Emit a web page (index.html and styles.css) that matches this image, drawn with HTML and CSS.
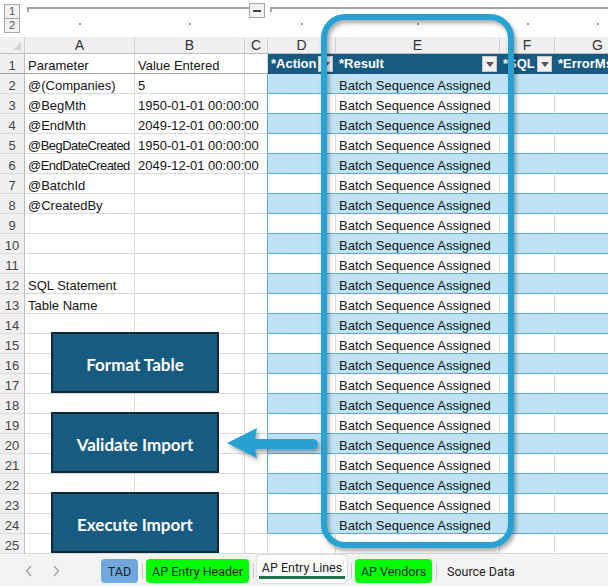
FILE: index.html
```html
<!DOCTYPE html>
<html lang="en">
<head>
    <meta charset="UTF-8">
    <meta name="viewport" content="width=device-width, initial-scale=1.0">
    <title>AP Entry Lines</title>
    <link rel="stylesheet" href="styles.css">
</head>
<body>
<div class="page">
    <div class="sheet">
        <!-- outline / grouping bar -->
        <div class="outline">
            <div class="levels">
                <div class="lvl">1</div>
                <div class="lvl">2</div>
            </div>
            <div class="bracket">
                <div class="line"></div>
                <div class="minus"></div>
            </div>
            <div class="bracket bracket2">
                <div class="line"></div>
            </div>
            <span class="dot"></span>
            <span class="dot"></span>
            <span></span>
            <span class="dot"></span>
            <span class="dot"></span>
            <span class="dot"></span>
            <span class="dot"></span>
        </div>

        <table class="grid">
            <colgroup>
                <col style="width:25px"><col style="width:110px"><col style="width:110px"><col style="width:23px">
                <col style="width:68px"><col style="width:164px"><col style="width:55px"><col style="width:86px">
            </colgroup>
            <tr class="cols">
                <th class="corner"><i></i></th><th>A</th><th>B</th><th>C</th><th>D</th><th>E</th><th>F</th><th>G</th>
            </tr>
            <tr class="r1">
                <th class="rn">1</th><td>Parameter</td><td>Value Entered</td><td class="c"></td>
                <td class="h"><div class="hd"><span>*Action</span><i class="dd"></i></div></td>
                <td class="h"><div class="hd"><span>*Result</span><i class="dd"></i></div></td>
                <td class="h"><div class="hd"><span>*SQL</span><i class="dd"></i></div></td>
                <td class="h"><div class="hd"><span>*ErrorMsg</span><i class="dd"></i></div></td>
            </tr>
            <tr class="b"><th class="rn">2</th><td>@(Companies)</td><td>5</td><td class="c"></td><td class="t"></td><td class="t">Batch Sequence Assigned</td><td class="t"></td><td class="t"></td></tr>
            <tr class="w"><th class="rn">3</th><td>@BegMth</td><td>1950-01-01 00:00:00</td><td class="c"></td><td class="t"></td><td class="t">Batch Sequence Assigned</td><td class="t"></td><td class="t"></td></tr>
            <tr class="b"><th class="rn">4</th><td>@EndMth</td><td>2049-12-01 00:00:00</td><td class="c"></td><td class="t"></td><td class="t">Batch Sequence Assigned</td><td class="t"></td><td class="t"></td></tr>
            <tr class="w"><th class="rn">5</th><td class="tight">@BegDateCreated</td><td>1950-01-01 00:00:00</td><td class="c"></td><td class="t"></td><td class="t">Batch Sequence Assigned</td><td class="t"></td><td class="t"></td></tr>
            <tr class="b"><th class="rn">6</th><td class="tight">@EndDateCreated</td><td>2049-12-01 00:00:00</td><td class="c"></td><td class="t"></td><td class="t">Batch Sequence Assigned</td><td class="t"></td><td class="t"></td></tr>
            <tr class="w"><th class="rn">7</th><td>@BatchId</td><td></td><td class="c"></td><td class="t"></td><td class="t">Batch Sequence Assigned</td><td class="t"></td><td class="t"></td></tr>
            <tr class="b"><th class="rn">8</th><td>@CreatedBy</td><td></td><td class="c"></td><td class="t"></td><td class="t">Batch Sequence Assigned</td><td class="t"></td><td class="t"></td></tr>
            <tr class="w"><th class="rn">9</th><td></td><td></td><td class="c"></td><td class="t"></td><td class="t">Batch Sequence Assigned</td><td class="t"></td><td class="t"></td></tr>
            <tr class="b"><th class="rn">10</th><td></td><td></td><td class="c"></td><td class="t"></td><td class="t">Batch Sequence Assigned</td><td class="t"></td><td class="t"></td></tr>
            <tr class="w"><th class="rn">11</th><td></td><td></td><td class="c"></td><td class="t"></td><td class="t">Batch Sequence Assigned</td><td class="t"></td><td class="t"></td></tr>
            <tr class="b"><th class="rn">12</th><td>SQL Statement</td><td></td><td class="c"></td><td class="t"></td><td class="t">Batch Sequence Assigned</td><td class="t"></td><td class="t"></td></tr>
            <tr class="w"><th class="rn">13</th><td>Table Name</td><td></td><td class="c"></td><td class="t"></td><td class="t">Batch Sequence Assigned</td><td class="t"></td><td class="t"></td></tr>
            <tr class="b"><th class="rn">14</th><td></td><td></td><td class="c"></td><td class="t"></td><td class="t">Batch Sequence Assigned</td><td class="t"></td><td class="t"></td></tr>
            <tr class="w"><th class="rn">15</th><td></td><td></td><td class="c"></td><td class="t"></td><td class="t">Batch Sequence Assigned</td><td class="t"></td><td class="t"></td></tr>
            <tr class="b"><th class="rn">16</th><td></td><td></td><td class="c"></td><td class="t"></td><td class="t">Batch Sequence Assigned</td><td class="t"></td><td class="t"></td></tr>
            <tr class="w"><th class="rn">17</th><td></td><td></td><td class="c"></td><td class="t"></td><td class="t">Batch Sequence Assigned</td><td class="t"></td><td class="t"></td></tr>
            <tr class="b"><th class="rn">18</th><td></td><td></td><td class="c"></td><td class="t"></td><td class="t">Batch Sequence Assigned</td><td class="t"></td><td class="t"></td></tr>
            <tr class="w"><th class="rn">19</th><td></td><td></td><td class="c"></td><td class="t"></td><td class="t">Batch Sequence Assigned</td><td class="t"></td><td class="t"></td></tr>
            <tr class="b"><th class="rn">20</th><td></td><td></td><td class="c"></td><td class="t"></td><td class="t">Batch Sequence Assigned</td><td class="t"></td><td class="t"></td></tr>
            <tr class="w"><th class="rn">21</th><td></td><td></td><td class="c"></td><td class="t"></td><td class="t">Batch Sequence Assigned</td><td class="t"></td><td class="t"></td></tr>
            <tr class="b"><th class="rn">22</th><td></td><td></td><td class="c"></td><td class="t"></td><td class="t">Batch Sequence Assigned</td><td class="t"></td><td class="t"></td></tr>
            <tr class="w"><th class="rn">23</th><td></td><td></td><td class="c"></td><td class="t"></td><td class="t">Batch Sequence Assigned</td><td class="t"></td><td class="t"></td></tr>
            <tr class="b"><th class="rn">24</th><td></td><td></td><td class="c"></td><td class="t"></td><td class="t">Batch Sequence Assigned</td><td class="t"></td><td class="t"></td></tr>
            <tr><th class="rn">25</th><td></td><td></td><td></td><td></td><td></td><td></td><td></td></tr>
        </table>

        <!-- shapes floating over the cells -->
        <div class="btn btn-format">Format Table</div>
        <div class="btn btn-validate">Validate Import</div>
        <div class="btn btn-execute">Execute Import</div>

        <div class="focus"></div>
        <svg class="arrow" width="110" height="50" viewBox="0 0 110 50">
            <path d="M7 23 L37 8 L35 19 L93 19 A5 5 0 0 1 93 29 L35 29 L37 38 Z" fill="#27a3d3"/>
        </svg>
    </div>

    <div class="tabs">
        <div class="nav">
            <svg width="8" height="12" viewBox="0 0 8 12"><path d="M6 1 L1.5 6 L6 11" fill="none" stroke="#9a9a9a" stroke-width="1.2"/></svg>
            <svg width="8" height="12" viewBox="0 0 8 12"><path d="M2 1 L6.5 6 L2 11" fill="none" stroke="#9a9a9a" stroke-width="1.2"/></svg>
        </div>
        <div class="tab tad">TAD</div>
        <span class="sep"></span>
        <div class="tab green w-header">AP Entry Header</div>
        <span class="sep"></span>
        <div class="tab active"><span>AP Entry Lines</span></div>
        <span class="sep"></span>
        <div class="tab green w-vendors">AP Vendors</div>
        <span class="sep"></span>
        <div class="tab plain">Source Data</div>
    </div>
</div>
</body>
</html>
```

FILE: styles.css
```css
body {
    margin: 0;
    font-family: "Liberation Sans", Arial, sans-serif;
    font-size: 13px;
    background: #fff;
}
.page {
    width: 608px;
    height: 586px;
    overflow: hidden;
}
.sheet {
    position: relative;
    height: 554px;
    overflow: hidden;
}

/* outline bar */
.outline {
    display: grid;
    grid-template-columns: 25px 110px 110px 23px 68px 164px 55px 86px;
    grid-template-rows: 18px 19px;
    width: 641px;
}
.levels {
    grid-row: 1 / 3;
    padding: 4px 0 0 4px;
}
.lvl {
    width: 14px;
    height: 13px;
    border: 1px solid #a8a8a8;
    background: #f2f2f2;
    color: #555;
    font-size: 11px;
    line-height: 13px;
    text-align: center;
    margin-bottom: -1px;
}
.bracket {
    grid-column: 2 / 5;
    display: flex;
    align-items: flex-start;
    padding: 3px 3px 0 2px;
}
.bracket2 {
    grid-column: 5 / 9;
    padding-right: 0;
}
.line {
    flex: 1;
    height: 3px;
    margin-top: 4px;
    border-top: 2px solid #a3a3a3;
    border-left: 2px solid #a3a3a3;
}
.minus {
    position: relative;
    width: 14px;
    height: 13px;
    border: 1px solid #a3a3a3;
    background: #f2f2f2;
}
.minus::after {
    content: "";
    position: absolute;
    left: 3px;
    top: 6px;
    width: 8px;
    height: 2px;
    background: #444;
}
.outline span {
    display: flex;
    justify-content: center;
}
.dot::before {
    content: "";
    width: 2px;
    height: 2px;
    margin-top: 5px;
    background: #9a9a9a;
}

/* cells */
.grid {
    border-collapse: separate;
    border-spacing: 0;
    table-layout: fixed;
    width: 641px;
}
.grid tr {
    height: 20px;
}
.grid td,
.grid th {
    box-sizing: border-box;
    height: 20px;
    padding: 0 3px;
    border-right: 1px solid #dadada;
    border-bottom: 1px solid #dadada;
    white-space: nowrap;
    overflow: hidden;
    vertical-align: bottom;
    line-height: 15px;
    font-weight: normal;
    text-align: left;
    color: #141414;
}
/* column B spills into the empty column C, as Excel does */
.grid td:nth-child(3) {
    overflow: visible;
}
.grid td.tight {
    letter-spacing: -0.55px;
}
.grid tr.cols {
    height: 17px;
}
.grid tr.cols th {
    height: 17px;
    padding: 0;
    background: #f0f0f0;
    text-align: center;
    vertical-align: middle;
    font-size: 14px;
    line-height: 16px;
    color: #333;
    border-right-color: #d0d0d0;
    border-bottom-color: #bdbdbd;
}
.grid th.corner {
    position: relative;
    border-right-color: #bdbdbd;
}
.corner i {
    position: absolute;
    right: 3px;
    bottom: 3px;
    border-left: 8px solid transparent;
    border-bottom: 8px solid #d2d2d2;
}
.grid th.rn {
    padding: 0;
    background: #f0f0f0;
    text-align: center;
    color: #444;
    border-right-color: #bdbdbd;
}
.r1 th,
.r1 td {
    border-bottom-color: #a6a6a6;
}
.grid td.h {
    padding: 0 2px 0 3px;
    vertical-align: middle;
    line-height: 16px;
    background: #175b80;
    color: #fff;
    font-weight: bold;
    border-right-color: #175b80;
    border-bottom-color: #175b80;
}
.hd {
    display: flex;
    justify-content: space-between;
    align-items: center;
}
.dd {
    position: relative;
    flex: none;
    width: 15px;
    height: 16px;
    box-sizing: border-box;
    background: #f2f2f2;
    border: 1px solid #c8c8c8;
}
.dd::after {
    content: "";
    position: absolute;
    left: 3px;
    top: 5px;
    border-left: 4px solid transparent;
    border-right: 4px solid transparent;
    border-top: 5px solid #555;
}
.b td.c,
.w td.c {
    border-right-color: #5aaadc;
}
.b td.t {
    background: #bfe3f5;
    border-right-color: #bfe3f5;
    border-bottom-color: #5aaadc;
}
.w td.t {
    border-bottom-color: #5aaadc;
}

/* macro buttons */
.btn {
    position: absolute;
    left: 51px;
    width: 168px;
    height: 61px;
    box-sizing: border-box;
    display: flex;
    align-items: center;
    justify-content: center;
    padding-top: 3px;
    background: #175b80;
    border: 2px solid #0e2b3d;
    color: #fff;
    font-family: Lato, "Open Sans", sans-serif;
    font-weight: 700;
    font-size: 17px;
}
.btn-format { top: 332px; }
.btn-validate { top: 412px; }
.btn-execute { top: 492px; }

/* callout */
.focus {
    position: absolute;
    left: 321px;
    top: 14px;
    width: 193px;
    height: 534px;
    box-sizing: border-box;
    border: 6px solid #27a3d3;
    border-radius: 24px;
    filter: drop-shadow(2px 3px 2px rgba(0,0,0,0.35));
}
.arrow {
    position: absolute;
    left: 220px;
    top: 420px;
    filter: drop-shadow(2px 3px 2px rgba(0,0,0,0.35));
}

/* sheet tabs */
.tabs {
    height: 32px;
    display: flex;
    align-items: flex-start;
    padding-top: 5px;
    box-sizing: border-box;
    background: #f3f3f3;
    font-family: Roboto, "Liberation Sans", sans-serif;
    font-size: 12.5px;
    color: #242424;
    white-space: nowrap;
}
.nav {
    display: flex;
    gap: 19px;
    width: 76px;
    padding: 6px 0 0 25px;
}
.tab {
    height: 24px;
    display: flex;
    align-items: center;
    justify-content: center;
    border-radius: 4px;
}
.tad {
    width: 37px;
    background: #6fa8dc;
}
.green {
    background: #00ff00;
}
.w-header { width: 103px; }
.w-vendors { width: 77px; }
.active {
    width: 90px;
    height: 28px;
    margin-top: -4px;
    align-items: flex-start;
    background: #fbfbfb;
    box-shadow: 0 0 2px rgba(0,0,0,0.3);
}
.active span {
    padding: 5px 3px 1px;
    border-bottom: 3px solid #217346;
}
.plain {
    padding: 0 7px;
}
.sep {
    width: 1px;
    height: 16px;
    margin: 4px 3px 0 4px;
    background: #cacaca;
}
```
